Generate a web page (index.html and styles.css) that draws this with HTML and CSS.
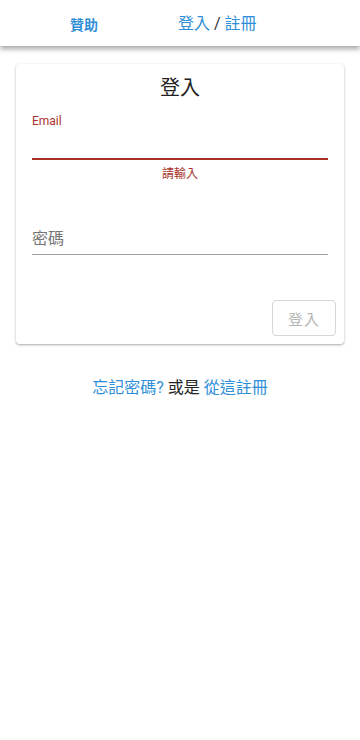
FILE: index.html
```html
<!DOCTYPE html>
<html lang="zh-Hant">
<head>
<meta charset="utf-8">
<link rel="stylesheet" href="styles.css">
</head>
<body>
<header class="topbar">
  <a class="nav-sponsor">贊助</a>
  <div class="nav-auth"><a>登入</a> / <a>註冊</a></div>
</header>
<main class="content">
  <section class="card">
    <h1 class="card-title">登入</h1>
    <div class="field field-error">
      <label class="field-label">Email</label>
      <div class="field-input"></div>
      <div class="field-help">請輸入</div>
    </div>
    <div class="field field-pw">
      <div class="field-input field-placeholder">密碼</div>
    </div>
    <div class="actions">
      <button class="btn-login" disabled>登入</button>
    </div>
  </section>
  <p class="footer-links"><a>忘記密碼?</a> 或是 <a>從這註冊</a></p>
</main>
</body>
</html>
```

FILE: styles.css
```css
* { box-sizing: border-box; }
html, body { margin: 0; padding: 0; background: #fff; }
body {
  font-family: Roboto, "Noto Sans CJK TC", sans-serif;
  color: #212121;
  width: 360px;
  height: 740px;
  overflow: hidden;
}
a { color: #2f8fd8; text-decoration: none; }
.topbar {
  height: 46px;
  display: flex;
  align-items: center;
  padding-left: 70px;
  gap: 80px;
  background: #fff;
  box-shadow: 0 3px 5px rgba(0,0,0,0.35);
  position: relative;
}
.nav-sponsor { font-size: 14px; font-weight: 700; margin-top: 2px; }
.nav-auth { font-size: 16px; color: #333; margin-top: -2px; }
.content { padding: 18px 16px 0; }
.card {
  background: #fff;
  border-radius: 4px;
  box-shadow: 0 1px 3px rgba(0,0,0,0.25), 0 1px 1px rgba(0,0,0,0.1);
  padding: 10px 16px 8px;
  height: 280px;
}
.card-title {
  margin: 0;
  text-align: center;
  font-size: 20px;
  font-weight: 400;
  line-height: 28px;
  color: #212121;
}
.field-label {
  display: block;
  margin-top: 11px;
  font-size: 12px;
  line-height: 16px;
  color: #a8322a;
}
.field-input {
  height: 22px;
  border-bottom: 1px solid #9e9e9e;
}
.field-error .field-input {
  height: 31px;
  border-bottom: 2px solid #a8322a;
}
.field-help {
  text-align: center;
  font-size: 12px;
  line-height: 16px;
  margin-top: 6px;
  color: #a8322a;
}
.field-pw { margin-top: 41px; }
.field-placeholder {
  height: 32px;
  font-size: 16px;
  line-height: 22px;
  color: #757575;
  padding-top: 5px;
}
.actions {
  display: flex;
  justify-content: flex-end;
  margin-top: 45px;
  margin-right: -8px;
}
.btn-login {
  width: 64px;
  height: 36px;
  border: 1px solid #d6d6d6;
  border-radius: 4px;
  background: #fff;
  color: #b8b8b8;
  font-family: Roboto, "Noto Sans CJK TC", sans-serif;
  font-size: 15px;
  letter-spacing: 1px;
}
.footer-links {
  margin: 30px 0 0;
  text-align: center;
  font-size: 16px;
  color: #212121;
}
```
